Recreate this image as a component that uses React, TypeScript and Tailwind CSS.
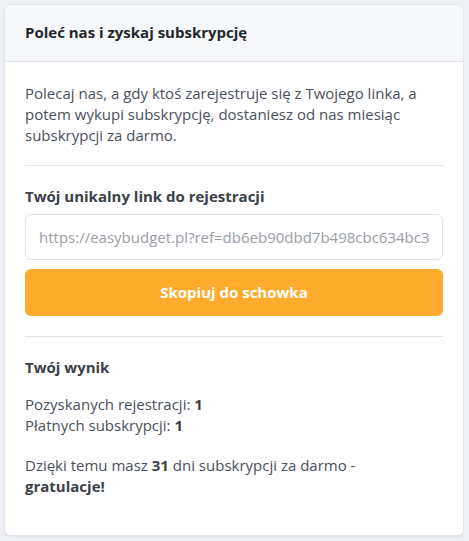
export default function App() {
  return (
    <div
      className="w-[469px] h-[541px] bg-[#edf0f5] pt-[4px] pl-[4px]"
      style={{ fontFamily: '"Open Sans", sans-serif' }}
    >
      <div className="w-[460px] h-[532px] bg-white border border-[#e3e6eb] rounded-[6px] overflow-hidden shadow-[0_1px_2px_rgba(0,0,0,0.06)]">
        <div className="bg-[#f7f8fa] border-b border-[#dfe2e7] h-[57px] pt-[17px] px-[20px]">
          <h2 className="text-[15px] leading-[21px] font-bold text-[#23272e]">
            Poleć nas i zyskaj subskrypcję
          </h2>
        </div>
        <div className="px-[20px] pt-[21px] text-[15px] leading-[21px] text-[#4a505c]">
          <p>
            Polecaj nas, a gdy ktoś zarejestruje się z Twojego linka, a potem wykupi subskrypcję, dostaniesz od nas miesiąc subskrypcji za darmo.
          </p>
          <div className="mt-[19px] h-px bg-[#dfe2e6]" />
          <h3 className="mt-[20px] font-bold text-[#3a3f4a]">Twój unikalny link do rejestracji</h3>
          <input
            readOnly
            value="https://easybudget.pl?ref=db6eb90dbd7b498cbc634bc3a1f2"
            className="mt-[7px] block w-full h-[46px] border border-[#dfe2e7] rounded-[6px] px-[13px] text-[15px] text-[#9a9ea6] bg-white outline-none"
            style={{ fontFamily: '"Open Sans", sans-serif' }}
          />
          <button className="mt-[9px] w-full h-[47px] rounded-[6px] bg-[#ffab2d] text-white font-bold text-[15px] flex items-center justify-center">
            Skopiuj do schowka
          </button>
          <div className="mt-[20px] h-px bg-[#dfe2e6]" />
          <h3 className="mt-[20px] font-bold text-[#3a3f4a]">Twój wynik</h3>
          <p className="mt-[16px]">
            Pozyskanych rejestracji: <b className="font-bold text-[#3a3f4a]">1</b>
            <br />
            Płatnych subskrypcji: <b className="font-bold text-[#3a3f4a]">1</b>
          </p>
          <p className="mt-[19px]">
            Dzięki temu masz <b className="font-bold text-[#3a3f4a]">31</b> dni subskrypcji za darmo -
            <br />
            <b className="font-bold text-[#3a3f4a]">gratulacje!</b>
          </p>
        </div>
      </div>
    </div>
  );
}
